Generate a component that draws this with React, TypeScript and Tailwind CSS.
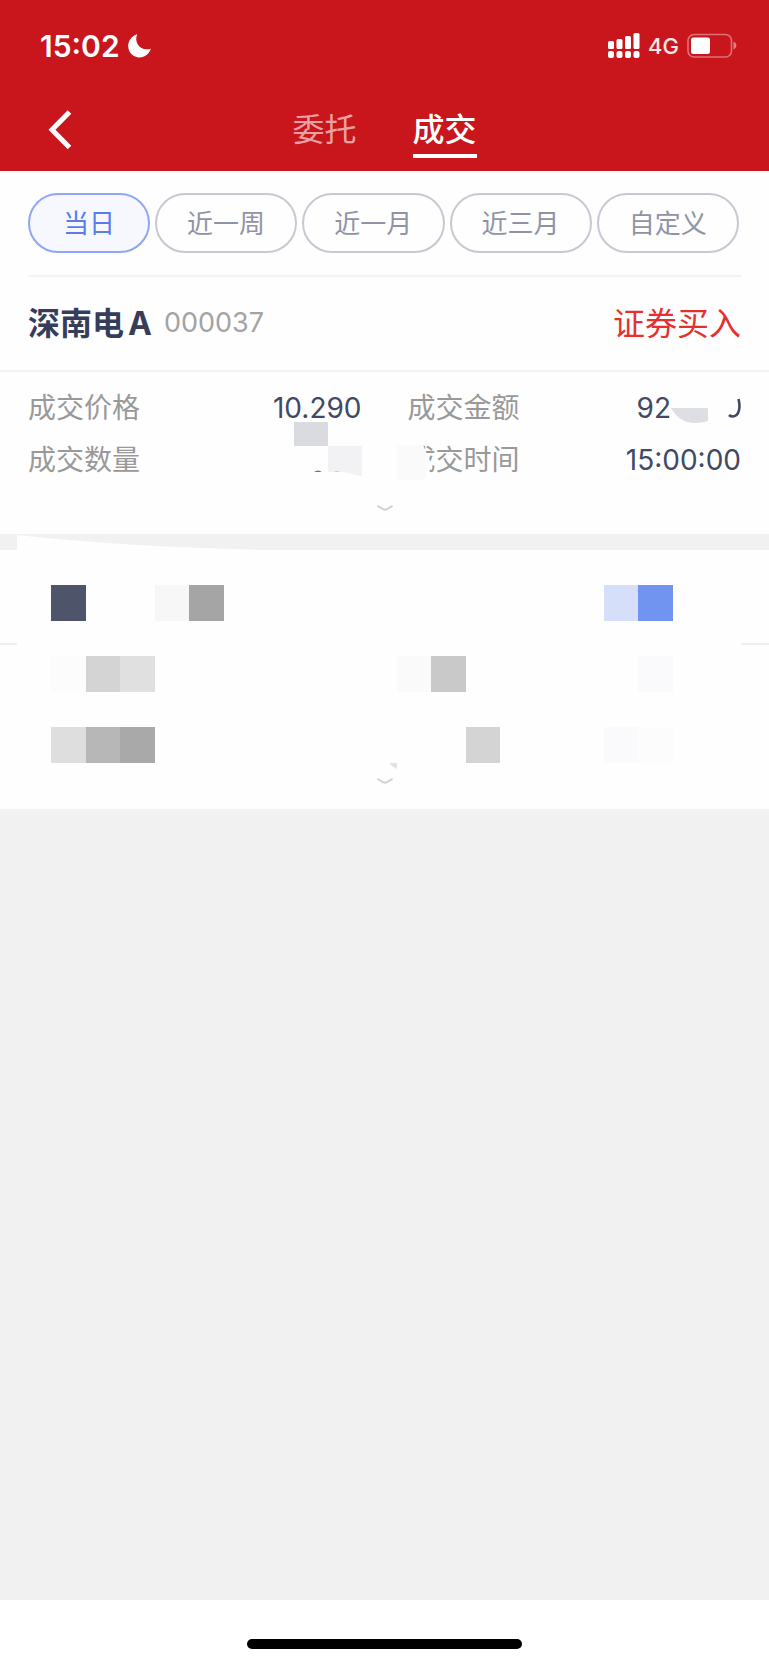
import React, { useState } from "react";
import clsx from "clsx";

const tabs = ["委托", "成交"];

const ranges = ["当日", "近一周", "近一月", "近三月", "自定义"];

// masked record: one entry per filled cell, 18 columns in a row
const maskedRows = [
  [
    "col-start-1 bg-[#4e546a]",
    "col-start-4 bg-[#f7f7f7]",
    "col-start-5 bg-[#a5a5a5]",
    "col-start-17 bg-[#d6dffa]",
    "col-start-18 bg-[#7094ef]",
  ],
  [
    "col-start-1 bg-[#fcfcfc]",
    "col-start-2 bg-[#d4d4d4]",
    "col-start-3 bg-[#e0e0e0]",
    "col-start-11 bg-[#fafafa]",
    "col-start-12 bg-[#c9c9c9]",
    "col-start-18 bg-[#fafafd]",
  ],
  [
    "col-start-1 bg-[#dedede]",
    "col-start-2 bg-[#b7b7b7]",
    "col-start-3 bg-[#a9a9a9]",
    "col-start-13 bg-[#d4d4d4]",
    "col-start-17 bg-[#fafafc]",
    "col-start-18 bg-[#fcfcfc]",
  ],
];

function StatusBar() {
  return (
    <div className="flex items-center justify-between pt-6 pl-10 pr-8 text-white">
      <div className="flex items-center gap-2">
        <span className="text-[30px] leading-11 font-semibold">15:02</span>
        <svg width="23" height="24" viewBox="0 0 23 24" fill="currentColor">
          <path d="M9.2 0.3C5.6 9 12.4 17.6 22.8 14.8C21.2 20.2 16.8 23.4 11.6 23.4C5.2 23.4 0.2 18.4 0.2 12C0.2 6.8 3.8 1.8 9.2 0.3Z" />
        </svg>
      </div>
      <div className="flex items-center">
        <svg width="32" height="26" viewBox="0 0 32 26" fill="currentColor">
          <rect x="0" y="8" width="6" height="8" rx="1.5" />
          <rect x="8.5" y="6" width="6" height="10" rx="1.5" />
          <rect x="17" y="3" width="6" height="13" rx="1.5" />
          <rect x="25.5" y="0" width="6" height="16" rx="1.5" />
          <rect x="0" y="18" width="6" height="7" rx="2" />
          <rect x="8.5" y="18" width="6" height="7" rx="2" />
          <rect x="17" y="18" width="6" height="7" rx="2" />
          <rect x="25.5" y="18" width="6" height="7" rx="2" />
        </svg>
        <span className="ml-2 mr-2 text-[22px] leading-11 font-medium text-white/90">4G</span>
        <svg width="50" height="26" viewBox="0 0 50 26" fill="none">
          <rect x="1" y="1.5" width="43.5" height="22.5" rx="6" stroke="#fff" strokeOpacity="0.4" strokeWidth="1.6" />
          <rect x="4" y="4.5" width="19" height="16.5" rx="2.5" fill="#fff" />
          <path d="M46.5 8.5C50.3 10 50.3 15 46.5 16.5Z" fill="#fff" fillOpacity="0.45" />
        </svg>
      </div>
    </div>
  );
}

function Arrow() {
  return (
    <svg width="16" height="9" viewBox="0 0 16 9" fill="none" className="block">
      <path d="M0.5 1.8L6 5.2Q8 6.3 10 5.2L15.5 1.8" stroke="#d0d2d8" strokeWidth="2" />
    </svg>
  );
}

function Field({ label, children }: { label: string; children?: React.ReactNode }) {
  return (
    <div className="relative flex items-center justify-between">
      <dt className="text-[#999]">{label}</dt>
      <dd className="flex items-center text-[#414965]">{children}</dd>
    </div>
  );
}

export default function App() {
  const [tab, setTab] = useState("成交");
  const [range, setRange] = useState("当日");

  return (
    <div className="flex min-h-screen flex-col bg-[#f1f1f1] font-['Inter','Noto_Sans_CJK_SC',sans-serif]">
      <header className="bg-[#c8161c] pb-[13px]">
        <StatusBar />
        <nav className="mt-[38px] grid grid-cols-[1fr_auto_1fr] items-start">
          <button aria-label="返回" className="ml-12 mt-[3px] w-6 text-white">
            <svg width="24" height="42" viewBox="0 0 24 42" fill="none">
              <path d="M21.5 3L4 20.8L21.5 38.6" stroke="currentColor" strokeWidth="5" />
            </svg>
          </button>
          <div className="flex gap-14">
            {tabs.map((t) => (
              <button
                key={t}
                onClick={() => setTab(t)}
                className={clsx(
                  "border-b-4 text-[32px] leading-[48px]",
                  tab === t ? "border-white font-medium text-white" : "border-transparent text-white/60"
                )}
              >
                {t}
              </button>
            ))}
          </div>
        </nav>
      </header>

      <section className="bg-[#fefefe]">
        <div className="flex gap-[5px] pt-[22px] pb-[22px] pl-7 pr-[30px]">
          {ranges.map((r) => (
            <button
              key={r}
              onClick={() => setRange(r)}
              className={clsx(
                "h-[60px] rounded-full border-2 text-[26px] first:w-[122px] not-first:flex-1",
                range === r
                  ? "border-[#8ea6f3] bg-[#f7f8fd] text-[#5c7cec]"
                  : "border-[#c8c8d2] text-[#9093a5]"
              )}
            >
              {r}
            </button>
          ))}
        </div>

        <div className="mx-7 flex h-[95px] items-center justify-between border-t-2 border-[#f3f3f4]">
          <h2 className="flex items-center text-[32px] font-bold text-[#363d5a]">
            深南电
            <span className="ml-1">A</span>
            <span className="ml-3 text-[27px] font-normal text-[#a3a3a3]">000037</span>
          </h2>
          <span className="text-[32px] text-[#e5302f]">证券买入</span>
        </div>

        <dl className="grid grid-cols-2 gap-x-[46px] border-t-2 border-[#f3f3f4] px-7 pt-[10px] text-[28px] leading-[52px]">
          <Field label="成交价格">10.290</Field>
          <Field label="成交金额">
            92
            <svg width="70" height="34" viewBox="0 0 70 34" fill="none">
              <path d="M0 17H37V30Q30 32.5 22 32Q8 31 0 17Z" fill="#dddfe4" />
              <path d="M67.5 8C69.5 16 68.5 25 62 25.5Q59.5 25.5 58 24" stroke="#414965" strokeWidth="2.6" />
            </svg>
          </Field>
          <Field label="成交数量">
            <svg width="69" height="56" viewBox="0 0 69 56" className="absolute right-0 -top-3">
              <path d="M1 0H35V24H1Z" fill="#d9dbe0" />
              <path d="M35 24H69V54.5L51 50H35Z" fill="#f2f2f5" />
              <path d="M21 50Q25 47 29 50Z" fill="#6d7389" />
              <path d="M41 50Q44 48 47 50Z" fill="#c5c8d1" />
            </svg>
          </Field>
          <Field label="成交时间">
            <svg width="38" height="36" viewBox="0 0 38 36" className="absolute -left-[11px] top-[11px]">
              <path d="M0 0H26L34 18L31 36H0Z" fill="#fefefe" />
              <path d="M0 0H24Q28 4 32 15L28 35H0Z" fill="#fafafa" />
            </svg>
            15:00:00
          </Field>
        </dl>
        <button aria-label="展开" className="mx-auto block pt-[18px] pb-[21px]">
          <Arrow />
        </button>
      </section>

      <div className="relative h-4">
        <svg width="250" height="16" viewBox="0 0 250 16" className="absolute left-[17px] top-0">
          <path d="M0 1Q110 13 250 16H0Z" fill="#fefefe" />
        </svg>
      </div>

      <section className="bg-[#fefefe] pt-[35px]">
        {maskedRows.map((cells, i) => (
          <React.Fragment key={i}>
            <div className="grid grid-cols-18 pl-[51px] pr-24">
              {cells.map((c) => (
                <span key={c} className={clsx("row-start-1 h-9", c)} />
              ))}
            </div>
            {i === 0 && (
              <div className="mt-[22px] mb-[11px] flex justify-between">
                <span className="h-0.5 w-[17px] bg-[#efefef]" />
                <span className="h-0.5 w-7 bg-[#efefef]" />
              </div>
            )}
            {i === 1 && <div className="h-[35px]" />}
          </React.Fragment>
        ))}
        <button aria-label="展开" className="relative mx-auto block pt-[14px] pb-[23px]">
          <svg width="8" height="6" viewBox="0 0 8 6" className="absolute left-3 top-0">
            <path d="M0 0H8V6Q3 4 0 0Z" fill="#e2e3e7" />
          </svg>
          <Arrow />
        </button>
      </section>

      <footer className="mt-auto flex h-16 justify-center bg-white pt-[39px]">
        <div className="h-[10px] w-[275px] rounded-full bg-black" />
      </footer>
    </div>
  );
}
